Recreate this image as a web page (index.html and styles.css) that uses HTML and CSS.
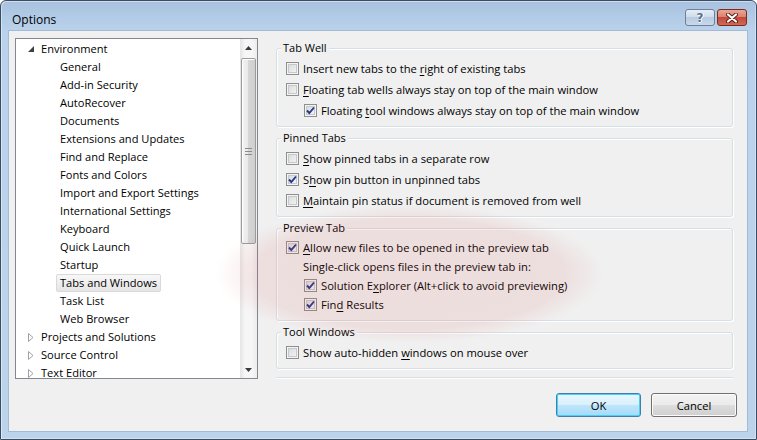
FILE: index.html
```html
<!DOCTYPE html>
<html>
<head>
<meta charset="utf-8">
<title>Options</title>
<link rel="stylesheet" href="styles.css">
</head>
<body>
<div class="window">
  <div class="titlebar">
    <span class="title">Options</span>
    <div class="caps">
      <span class="cap help">?</span>
      <span class="cap close"><svg width="14" height="10" viewBox="0 0 14 10"><path d="M3 1.5 L11 8.5 M11 1.5 L3 8.5" stroke="#5a1a12" stroke-width="4" stroke-linecap="round"/><path d="M3 1.5 L11 8.5 M11 1.5 L3 8.5" stroke="#fff" stroke-width="2.2" stroke-linecap="round"/></svg></span>
    </div>
  </div>
  <div class="client">
    <div class="main">
      <div class="tree">
        <ul class="nodes">
          <li class="node l0"><span class="twisty open"><svg width="6" height="6" viewBox="0 0 6 6"><path d="M6 0 L6 6 L0 6 Z" fill="#404040"/></svg></span><span>Environment</span></li>
          <li class="node l1">General</li>
          <li class="node l1">Add-in Security</li>
          <li class="node l1">AutoRecover</li>
          <li class="node l1">Documents</li>
          <li class="node l1">Extensions and Updates</li>
          <li class="node l1">Find and Replace</li>
          <li class="node l1">Fonts and Colors</li>
          <li class="node l1">Import and Export Settings</li>
          <li class="node l1">International Settings</li>
          <li class="node l1">Keyboard</li>
          <li class="node l1">Quick Launch</li>
          <li class="node l1">Startup</li>
          <li class="node l1 sel"><span class="sel-label">Tabs and Windows</span></li>
          <li class="node l1">Task List</li>
          <li class="node l1">Web Browser</li>
          <li class="node l0"><span class="twisty"><svg width="6" height="9" viewBox="0 0 6 9"><path d="M0.5 0.5 L5 4.5 L0.5 8.5 Z" fill="none" stroke="#a0a0a0"/></svg></span><span>Projects and Solutions</span></li>
          <li class="node l0"><span class="twisty"><svg width="6" height="9" viewBox="0 0 6 9"><path d="M0.5 0.5 L5 4.5 L0.5 8.5 Z" fill="none" stroke="#a0a0a0"/></svg></span><span>Source Control</span></li>
          <li class="node l0"><span class="twisty"><svg width="6" height="9" viewBox="0 0 6 9"><path d="M0.5 0.5 L5 4.5 L0.5 8.5 Z" fill="none" stroke="#a0a0a0"/></svg></span><span>Text Editor</span></li>
        </ul>
        <div class="vscroll">
          <div class="sb-btn"><svg width="7" height="4" viewBox="0 0 7 4"><path d="M0 4 L3.5 0 L7 4 Z" fill="#3a3a3a"/></svg></div>
          <div class="sb-track">
            <div class="thumb"><svg width="7" height="7" viewBox="0 0 7 7"><path d="M0 0.5 H7 M0 3.5 H7 M0 6.5 H7" stroke="#8a8a8a"/></svg></div>
          </div>
          <div class="sb-btn"><svg width="7" height="4" viewBox="0 0 7 4"><path d="M0 0 L3.5 4 L7 0 Z" fill="#3a3a3a"/></svg></div>
        </div>
      </div>
      <div class="pane">
        <div class="group">
          <div class="gtitle">Tab Well</div>
          <div class="row"><span class="cb"></span><span class="lbl">Insert new tabs to the <u>r</u>ight of existing tabs</span></div>
          <div class="row"><span class="cb"></span><span class="lbl"><u>F</u>loating tab wells always stay on top of the main window</span></div>
          <div class="row ind"><span class="cb on"><svg width="11" height="11" viewBox="0 0 11 11"><path d="M2 5.5 L4.3 8 L9 2.5" fill="none" stroke="#22398c" stroke-width="1.9"/></svg></span><span class="lbl">Floating <u>t</u>ool windows always stay on top of the main window</span></div>
        </div>
        <div class="group">
          <div class="gtitle">Pinned Tabs</div>
          <div class="row"><span class="cb"></span><span class="lbl"><u>S</u>how pinned tabs in a separate row</span></div>
          <div class="row"><span class="cb on"><svg width="11" height="11" viewBox="0 0 11 11"><path d="M2 5.5 L4.3 8 L9 2.5" fill="none" stroke="#22398c" stroke-width="1.9"/></svg></span><span class="lbl">S<u>h</u>ow pin button in unpinned tabs</span></div>
          <div class="row"><span class="cb"></span><span class="lbl"><u>M</u>aintain pin status if document is removed from well</span></div>
        </div>
        <div class="group tight">
          <div class="gtitle">Preview Tab</div>
          <div class="row"><span class="cb on"><svg width="11" height="11" viewBox="0 0 11 11"><path d="M2 5.5 L4.3 8 L9 2.5" fill="none" stroke="#22398c" stroke-width="1.9"/></svg></span><span class="lbl"><u>A</u>llow new files to be opened in the preview tab</span></div>
          <div class="row note"><span class="lbl">Single-click opens files in the preview tab in:</span></div>
          <div class="row ind"><span class="cb on"><svg width="11" height="11" viewBox="0 0 11 11"><path d="M2 5.5 L4.3 8 L9 2.5" fill="none" stroke="#22398c" stroke-width="1.9"/></svg></span><span class="lbl">Solution E<u>x</u>plorer (Alt+click to avoid previewing)</span></div>
          <div class="row ind"><span class="cb on"><svg width="11" height="11" viewBox="0 0 11 11"><path d="M2 5.5 L4.3 8 L9 2.5" fill="none" stroke="#22398c" stroke-width="1.9"/></svg></span><span class="lbl">Fin<u>d</u> Results</span></div>
        </div>
        <div class="group">
          <div class="gtitle">Tool Windows</div>
          <div class="row"><span class="cb"></span><span class="lbl">Show auto-hidden <u>w</u>indows on mouse over</span></div>
        </div>
        <div class="sep"></div>
      </div>
    </div>
    <div class="actions">
      <button class="btn default">OK</button>
      <button class="btn">Cancel</button>
    </div>
  </div>
  <div class="annot"></div>
</div>
</body>
</html>
```

FILE: styles.css
```css
body {
  margin: 0;
  background: #fff;
  font-family: "Open Sans", "Noto Sans", sans-serif;
  font-size: 11px;
  color: #000;
}

.window {
  position: relative;
  width: 757px;
  height: 440px;
  box-sizing: border-box;
  border: 1px solid #3b4d62;
  border-radius: 6px 6px 0 0;
  padding: 0 8px 7px 7px;
  display: flex;
  flex-direction: column;
  background: linear-gradient(#a8c2e0, #bad2eb 30px, #bcd3ec);
  box-shadow: inset 1px 1px 0 rgba(255, 255, 255, 0.45), inset -1px -1px 0 rgba(255, 255, 255, 0.35);
  overflow: hidden;
}

.titlebar {
  height: 29px;
  flex: none;
  display: flex;
  align-items: flex-start;
  justify-content: space-between;
}

.title {
  margin-top: 11px;
  padding-left: 4px;
  line-height: 16px;
  font-size: 12px;
  color: #000;
}

.caps {
  margin-top: 8px;
  margin-right: 1px;
  display: flex;
  gap: 2px;
}

.cap {
  width: 30px;
  height: 17px;
  box-sizing: border-box;
  border: 1px solid #6e8098;
  border-radius: 3px;
  display: flex;
  align-items: center;
  justify-content: center;
}

.help {
  background: linear-gradient(#e4edf7, #cddbeb 50%, #b9cbe0 50%, #c9d9ec);
  color: #5b6f8a;
  font-family: "DejaVu Sans", sans-serif;
  font-size: 12px;
  font-weight: bold;
  text-shadow: 0 1px 0 #fff, 1px 0 0 #fff;
}

.close {
  border-color: #7d2a20;
  background: linear-gradient(#eba595, #d9806c 50%, #c4493a 50%, #d06a55);
}

.client {
  flex: 1;
  background: #f0f0f0;
  border: 1px solid #a3bad5;
  padding: 7px 0 0 6px;
  display: flex;
  flex-direction: column;
}

.main {
  display: flex;
  height: 341px;
}

.tree {
  width: 243px;
  height: 341px;
  box-sizing: border-box;
  border: 1px solid #828790;
  background: #fff;
  display: flex;
  overflow: hidden;
  flex: none;
}

.nodes {
  flex: 1;
  list-style: none;
  margin: 0;
  padding: 1px 0 0;
}

.node {
  height: 18px;
  line-height: 18px;
  white-space: nowrap;
  display: flex;
  align-items: center;
  font-size: 11.1px;
}

.l0 {
  padding-left: 12px;
}

.l1 {
  padding-left: 44px;
}

.twisty {
  width: 6px;
  margin-right: 7px;
  display: flex;
  align-items: center;
}

.sel-label {
  margin-left: -4px;
  padding: 0 3px;
  height: 18px;
  line-height: 16px;
  box-sizing: border-box;
  border: 1px solid #d9d9d9;
  border-radius: 2px;
  background: linear-gradient(#f8f8f8, #e5e5e5);
}

.vscroll {
  width: 17px;
  flex: none;
  display: flex;
  flex-direction: column;
  background: linear-gradient(90deg, #e4e4e4, #f6f6f6 30%, #f6f6f6 70%, #ececec);
}

.sb-btn {
  height: 17px;
  flex: none;
  display: flex;
  align-items: center;
  justify-content: center;
}

.sb-track {
  flex: 1;
  padding-top: 2px;
}

.thumb {
  margin: 0 1px;
  height: 186px;
  box-sizing: border-box;
  border: 1px solid #9b9b9b;
  border-radius: 2px;
  background: linear-gradient(90deg, #f4f4f4, #e8e8e8 50%, #d6d6d6 50%, #cfcfcf);
  box-shadow: inset 1px 1px 0 #fff;
  display: flex;
  align-items: center;
  justify-content: center;
}

.pane {
  margin-left: 18px;
  width: 457px;
  padding-top: 10px;
}

.group {
  border: 1px solid #d5dfe5;
  border-radius: 3px;
  padding: 0 8px 5px 9px;
  box-shadow: inset 1px 1px 0 #fff, 1px 1px 0 #fff;
}

.group + .group {
  margin-top: 11px;
}

.group.tight {
  padding-bottom: 6px;
}

.gtitle {
  width: max-content;
  height: 16px;
  line-height: 16px;
  margin: -9px 0 2px -5px;
  padding: 0 2px;
  background: #f0f0f0;
}

.row {
  height: 21px;
  display: flex;
  align-items: center;
  white-space: nowrap;
}

.lbl {
  font-size: 11.2px;
  line-height: 16px;
  padding-top: 0;
}

.tight .row {
  height: 19px;
}

.ind {
  padding-left: 18px;
}

.note {
  padding-left: 17px;
}

u {
  text-decoration: underline;
  text-underline-offset: 2px;
}

.cb {
  width: 13px;
  height: 13px;
  box-sizing: border-box;
  border: 1px solid #8e8f8f;
  margin-right: 4px;
  flex: none;
  background: linear-gradient(135deg, #d4d6d9, #f8f8f8);
  box-shadow: inset 0 0 0 1px #f4f4f4, inset 0 0 0 2px #c8c8c8;
  display: flex;
  align-items: center;
  justify-content: center;
}

.sep {
  margin-top: 8px;
  border-top: 1px solid #d5dfe5;
  border-bottom: 1px solid #fff;
}

.actions {
  margin-top: 14px;
  padding-right: 10px;
  display: flex;
  justify-content: flex-end;
  gap: 10px;
}

.btn {
  width: 86px;
  height: 24px;
  box-sizing: border-box;
  border: 1px solid #707070;
  border-radius: 3px;
  background: linear-gradient(#f2f2f2, #ebebeb 50%, #dddddd 50%, #cfcfcf);
  box-shadow: inset 0 0 0 1px #fbfbfb;
  font-family: inherit;
  font-size: 11.2px;
  color: #000;
  padding: 0;
}

.btn.default {
  width: 85px;
  border-color: #3c7fb1;
  background: linear-gradient(#eaf6fd, #d9f0fc 50%, #bee6fd 50%, #a7d9f5);
  box-shadow: inset 0 0 0 1px #48d1f8;
}

.annot {
  position: absolute;
  left: 214px;
  top: 204px;
  width: 388px;
  height: 138px;
  border-radius: 50%;
  background: radial-gradient(ellipse closest-side, rgba(215, 70, 70, 0.11) 0%, rgba(215, 70, 70, 0.1) 80%, rgba(215, 70, 70, 0) 100%);
  pointer-events: none;
}
```
